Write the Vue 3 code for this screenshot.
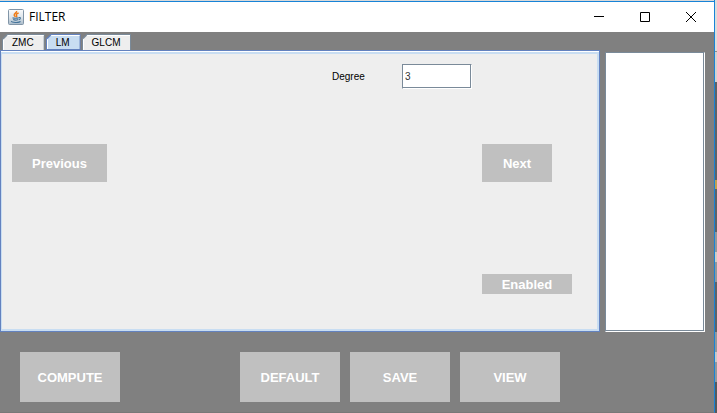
<script setup>
import { ref } from 'vue'

const tabs = ['ZMC', 'LM', 'GLCM']
const activeTab = ref('LM')
const degree = ref('3')
const actions = ['DEFAULT', 'SAVE', 'VIEW']
</script>

<template>
  <div class="desktop">
    <div class="window">
      <header class="title-bar">
        <svg class="app-icon" viewBox="0 0 16 16" aria-hidden="true">
          <defs>
            <linearGradient id="tile" x1="0" y1="0" x2="0" y2="1">
              <stop offset="0" stop-color="#fafbfc" />
              <stop offset="0.5" stop-color="#dfe6ec" />
              <stop offset="1" stop-color="#a9bac9" />
            </linearGradient>
          </defs>
          <rect x="0.5" y="0.5" width="15" height="15" rx="1" fill="url(#tile)" stroke="#8195a7" />
          <path d="M8.6 2C9.2 3.8 5.6 4.5 6.2 6.2C6.5 7 7.4 7.3 7.2 8.2M10.6 4C8 4.9 7.9 5.7 8.6 6.5C9 7.1 8.8 7.8 8.2 8.3" fill="none" stroke="#ee7a14" stroke-width="1.4" />
          <path d="M4.5 8.8C6 9.5 9.5 9.4 10.6 8.8M5.2 10.6C6.5 11.2 9 11.1 10.2 10.6M10.8 8.6C13 8 12.8 10.2 10.8 10.8M3.5 12C2.8 13.8 11.5 13.9 12.5 12.4" fill="none" stroke="#45749a" stroke-width="1.1" />
        </svg>
        <h1 class="title">FILTER</h1>
        <button type="button" class="caption-btn" aria-label="Minimize">
          <svg viewBox="0 0 10 10"><path d="M0 4.5H10" /></svg>
        </button>
        <button type="button" class="caption-btn" aria-label="Maximize">
          <svg viewBox="0 0 10 10"><path d="M0.5 0.5H9.5V9.5H0.5Z" /></svg>
        </button>
        <button type="button" class="caption-btn" aria-label="Close">
          <svg viewBox="0 0 10 10"><path d="M0 0L10 10M10 0L0 10" /></svg>
        </button>
      </header>

      <main class="workspace">
        <section class="tabbed">
          <div class="tabs" role="tablist">
            <button
              v-for="tab in tabs"
              :key="tab"
              type="button"
              role="tab"
              class="tab"
              :class="{ active: tab === activeTab }"
              :aria-selected="tab === activeTab"
              @click="activeTab = tab"
            ><span>{{ tab }}</span></button>
          </div>
          <div class="panel" role="tabpanel">
            <label class="degree-label" for="degree">Degree</label>
            <input id="degree" v-model="degree" class="degree-input" type="text" />
            <button type="button" class="btn previous">Previous</button>
            <button type="button" class="btn next">Next</button>
            <button type="button" class="btn enabled">Enabled</button>
          </div>
        </section>
        <div class="list"></div>
      </main>

      <footer class="footer">
        <button type="button" class="btn action compute">COMPUTE</button>
        <button v-for="action in actions" :key="action" type="button" class="btn action">{{ action }}</button>
      </footer>
    </div>
    <div class="behind"></div>
  </div>
</template>

<style>
body {
  margin: 0;
}
</style>

<style scoped>
* {
  box-sizing: border-box;
}

.desktop {
  display: flex;
  min-height: 100vh;
  font-family: "Liberation Sans", Arial, sans-serif;
  font-size: 10px;
  color: #000;
}

button {
  font-family: inherit;
  border: none;
  padding: 0;
}

.window {
  flex: 1;
  display: flex;
  flex-direction: column;
  background: #808080;
  border-right: 1px solid #1883d7;
  border-bottom: 1px solid #787878;
}

/* sliver of the desktop visible past the window edge */
.behind {
  width: 2px;
  background: linear-gradient(
    #dcdcdc 0 51px, #8c8c8c 51px 52px, #d2d2d2 52px 82px,
    #5d6267 82px 180px, #c0a050 180px 189px, #5d6267 189px 232px,
    #92989d 232px 252px, #cfccc6 252px 262px, #92989d 262px 282px,
    #5d6267 282px 332px, #92989d 332px 352px, #c8c8c8 352px 362px,
    #92989d 362px 382px, #55595d 382px
  );
}

.title-bar {
  display: flex;
  align-items: center;
  height: 32px;
  padding-left: 8px;
  background: #fff;
  border-top: 1px solid #d9d9d9;
  box-shadow: inset 0 1px #1883d7;
}

.app-icon {
  width: 16px;
  height: 16px;
}

.title {
  flex: 1;
  margin: 0 0 0 5px;
  font: 400 12px/16px "Open Sans", "Segoe UI", sans-serif;
}

.caption-btn {
  display: flex;
  align-items: center;
  justify-content: center;
  width: 46px;
  height: 28px;
  background: none;
}

.caption-btn svg {
  width: 10px;
  height: 10px;
  fill: none;
  stroke: #000;
  stroke-width: 1;
}

.workspace {
  display: flex;
  gap: 5px;
  padding: 2px 9px 0 0;
}

.tabbed {
  flex: 1;
}

.tabs {
  display: flex;
  gap: 1px;
  padding-left: 2px;
}

/* outer shape is the border colour, ::before is the fill, both with a cut corner */
.tab {
  position: relative;
  height: 16px;
  padding: 0 11px 0 10px;
  font-size: 10px;
  line-height: 18px;
  background: #7a8a99;
  clip-path: polygon(5px 0, 100% 0, 100% 100%, 0 100%, 0 5px);
}

.tab::before {
  content: "";
  position: absolute;
  inset: 1px 1px 0 1px;
  background: #eee;
  box-shadow: inset 1px 1px #fff;
  clip-path: polygon(5px 0, 100% 0, 100% 100%, 0 100%, 0 5px);
}

.tab span {
  position: relative;
}

.tab.active {
  background: #6382bf;
}

.tab.active::before {
  background: #c8ddf2;
  bottom: 1px;
}

.panel {
  display: grid;
  grid-template-columns: 1fr 70px 80px 90px;
  justify-items: start;
  padding: 13px 27px 37px 11px;
  background: #eee;
  border: 1px solid #6382bf;
  box-shadow: inset 0 1px #fff, inset 1px 3px #c8ddf2, inset -2px -2px #c8ddf2;
}

.degree-label {
  grid-column: 2;
  line-height: 25px;
}

.degree-input {
  width: 70px;
  height: 25px;
  padding: 0 2px;
  font: inherit;
  color: #333;
  outline: none;
}

.degree-input,
.list {
  border: 1px solid;
  border-color: #7a8a99 #fff #fff #7a8a99;
  border-radius: 0;
  background: #fff;
  box-shadow: inset -1px -1px #7a8a99;
}

.btn {
  font-size: 13px;
  font-weight: 700;
  color: #fff;
  background: #c0c0c0;
}

.previous,
.next {
  height: 38px;
  margin-top: 55px;
}

.previous {
  grid-column: 1;
  width: 95px;
}

.next {
  grid-column: 4;
  width: 70px;
}

.enabled {
  grid-column: 4;
  width: 90px;
  height: 20px;
  margin-top: 92px;
}

.list {
  width: 100px;
  margin-top: 18px;
}

.footer {
  display: flex;
  gap: 10px;
  padding: 20px 20px 10px;
}

.action {
  width: 100px;
  height: 50px;
}

.compute {
  margin-right: 110px;
}
</style>
